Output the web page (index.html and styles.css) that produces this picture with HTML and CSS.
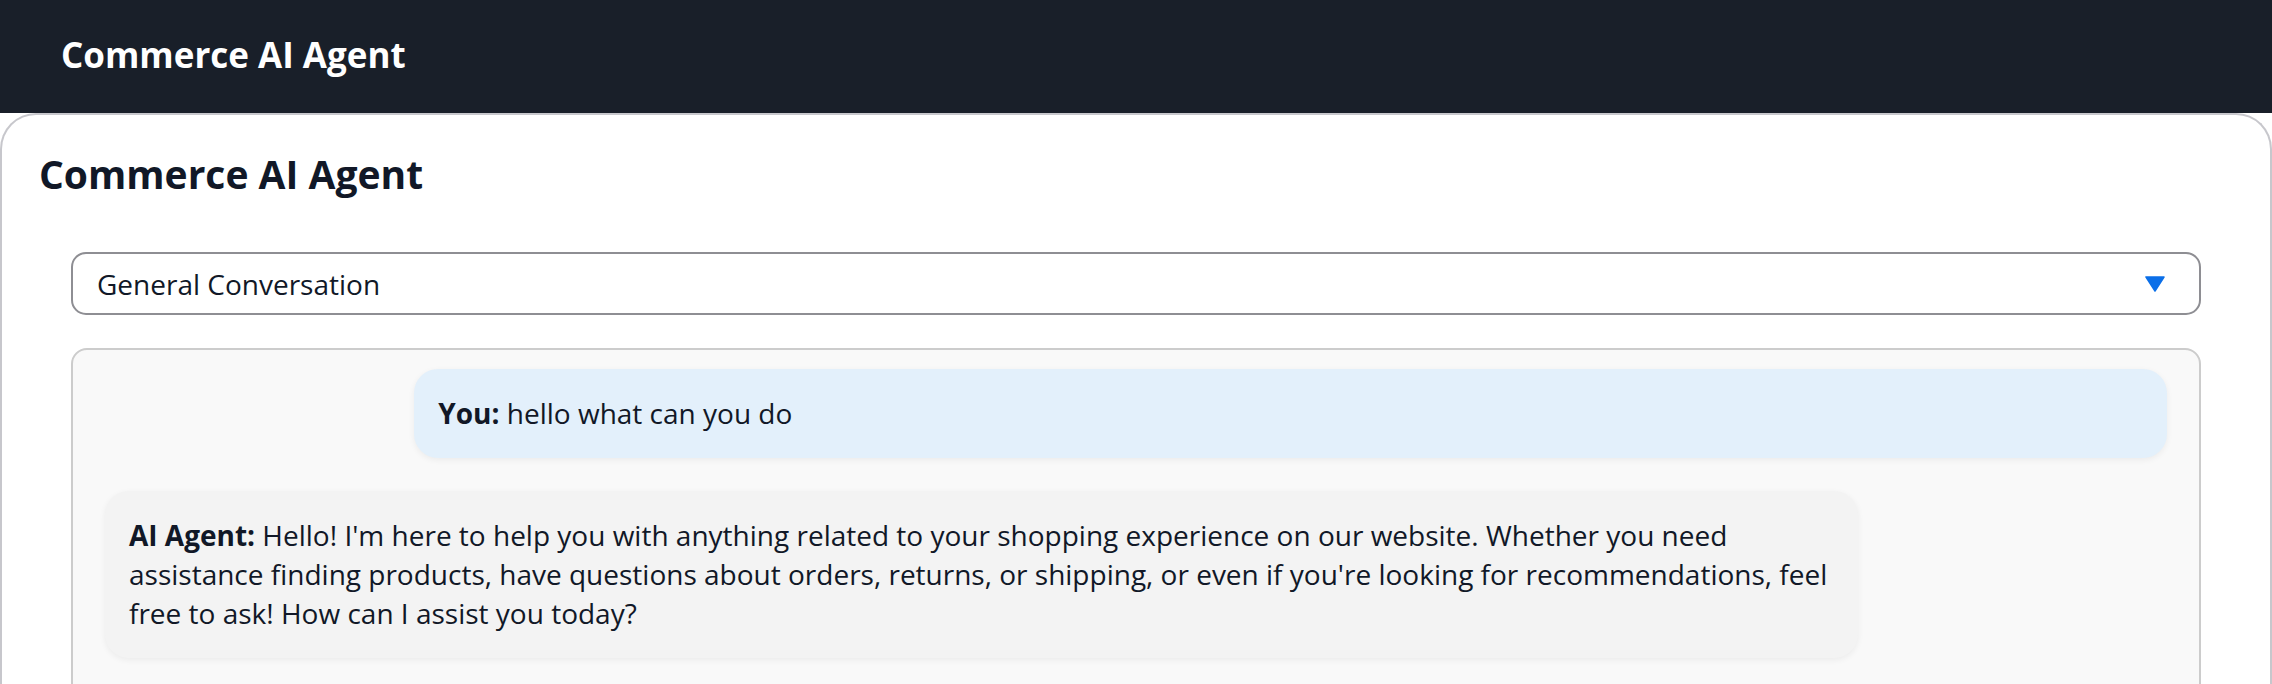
FILE: index.html
```html
<!DOCTYPE html>
<html lang="en">
<head>
<meta charset="utf-8">
<title>Commerce AI Agent</title>
<link rel="stylesheet" href="styles.css">
</head>
<body>
<header class="topbar">
  <div class="topbar-title">Commerce AI Agent</div>
</header>
<main class="card">
  <h1 class="page-title">Commerce AI Agent</h1>
  <div class="content">
    <div class="select">
      <span class="select-value">General Conversation</span>
      <svg class="select-arrow" width="20" height="16" viewBox="0 0 20 16"><path d="M1 1 H19 L10 15 Z" fill="#0b6fe8" stroke="#0b6fe8" stroke-width="1.5" stroke-linejoin="round"/></svg>
    </div>
    <section class="chat">
      <div class="msg msg-user"><strong>You:</strong> hello what can you do</div>
      <div class="msg msg-agent"><strong>AI Agent:</strong> Hello! I'm here to help you with anything related to your shopping experience on our website. Whether you need assistance finding products, have questions about orders, returns, or shipping, or even if you're looking for recommendations, feel free to ask! How can I assist you today?</div>
    </section>
  </div>
</main>
</body>
</html>
```
FILE: styles.css
```css
* { box-sizing: border-box; }
html, body { margin: 0; padding: 0; background: #ffffff; }
body {
  font-family: "Open Sans", "Noto Sans", sans-serif;
  color: #111827;
  height: 684px;
  overflow: hidden;
}
.topbar {
  background: #191f29;
  height: 113px;
  display: flex;
  align-items: center;
  padding: 0 61px;
}
.topbar-title {
  color: #ffffff;
  font-size: 35px;
  font-weight: 700;
  line-height: 1;
  margin-top: -4px;
}
.card {
  border: 2px solid #c7c7cc;
  border-bottom: none;
  border-radius: 36px 36px 0 0;
  padding: 32px 37px 0;
  min-height: 600px;
}
.page-title {
  margin: 0;
  font-size: 39px;
  font-weight: 700;
  line-height: 54px;
  color: #111827;
}
.content {
  padding: 0 32px;
  margin-top: 51px;
}
.select {
  height: 63px;
  border: 2px solid #8e8e93;
  border-radius: 15px;
  display: flex;
  align-items: center;
  justify-content: space-between;
  padding: 0 34px 0 24px;
  font-size: 28px;
}
.select-arrow { display: block; }
.chat {
  margin-top: 33px;
  background: #f9f9f9;
  border: 2px solid #cccccc;
  border-radius: 16px;
  padding: 19px 32px 40px;
  display: flex;
  flex-direction: column;
  gap: 33px;
}
.msg {
  max-width: 85%;
  padding: 25px 24px;
  border-radius: 24px;
  font-size: 28px;
  line-height: 39px;
  box-shadow: 0 2px 6px rgba(0,0,0,0.06);
}
.msg strong { font-weight: 700; }
.msg-user {
  align-self: flex-end;
  width: 85%;
  background: #e3f0fb;
}
.msg-agent {
  align-self: flex-start;
  background: #f3f3f3;
}
```
